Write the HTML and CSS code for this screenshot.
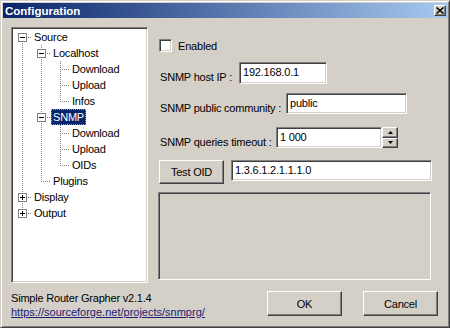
FILE: index.html
```html
<!DOCTYPE html>
<html lang="en">
<head>
  <meta charset="UTF-8">
  <meta name="viewport" content="width=device-width, initial-scale=1.0">
  <title>Configuration</title>
  <link rel="stylesheet" href="styles.css">
</head>
<body>
  <div class="window">
    <div class="titlebar">
      <span class="title">Configuration</span>
      <span class="close">
        <svg width="8" height="7" viewBox="0 0 8 7"><path d="M0.5 0.5L7.5 6.5M7.5 0.5L0.5 6.5" stroke="#000" stroke-width="1.5"/></svg>
      </span>
    </div>

    <div class="main">
      <div class="tree">
        <div class="node">
          <span class="cell first"><svg class="exp" width="9" height="9" viewBox="0 0 9 9"><rect x=".5" y=".5" width="8" height="8" fill="#fff" stroke="#808080"/><path d="M2 4.5h5" stroke="#000"/></svg></span>
          <span class="text">Source</span>
        </div>
        <div class="node">
          <span class="cell line"></span>
          <span class="cell tee"><svg class="exp" width="9" height="9" viewBox="0 0 9 9"><rect x=".5" y=".5" width="8" height="8" fill="#fff" stroke="#808080"/><path d="M2 4.5h5" stroke="#000"/></svg></span>
          <span class="text">Localhost</span>
        </div>
        <div class="node">
          <span class="cell line"></span><span class="cell line"></span><span class="cell tee"></span>
          <span class="text">Download</span>
        </div>
        <div class="node">
          <span class="cell line"></span><span class="cell line"></span><span class="cell tee"></span>
          <span class="text">Upload</span>
        </div>
        <div class="node">
          <span class="cell line"></span><span class="cell line"></span><span class="cell corner"></span>
          <span class="text">Infos</span>
        </div>
        <div class="node">
          <span class="cell line"></span>
          <span class="cell tee"><svg class="exp" width="9" height="9" viewBox="0 0 9 9"><rect x=".5" y=".5" width="8" height="8" fill="#fff" stroke="#808080"/><path d="M2 4.5h5" stroke="#000"/></svg></span>
          <span class="text selected">SNMP</span>
        </div>
        <div class="node">
          <span class="cell line"></span><span class="cell line"></span><span class="cell tee"></span>
          <span class="text">Download</span>
        </div>
        <div class="node">
          <span class="cell line"></span><span class="cell line"></span><span class="cell tee"></span>
          <span class="text">Upload</span>
        </div>
        <div class="node">
          <span class="cell line"></span><span class="cell line"></span><span class="cell corner"></span>
          <span class="text">OIDs</span>
        </div>
        <div class="node">
          <span class="cell line"></span><span class="cell corner"></span>
          <span class="text">Plugins</span>
        </div>
        <div class="node">
          <span class="cell tee"><svg class="exp" width="9" height="9" viewBox="0 0 9 9"><rect x=".5" y=".5" width="8" height="8" fill="#fff" stroke="#808080"/><path d="M2 4.5h5M4.5 2v5" stroke="#000"/></svg></span>
          <span class="text">Display</span>
        </div>
        <div class="node">
          <span class="cell corner"><svg class="exp" width="9" height="9" viewBox="0 0 9 9"><rect x=".5" y=".5" width="8" height="8" fill="#fff" stroke="#808080"/><path d="M2 4.5h5M4.5 2v5" stroke="#000"/></svg></span>
          <span class="text">Output</span>
        </div>
      </div>

      <div class="settings">
        <label class="check-row">
          <span class="checkbox"></span>
          <span>Enabled</span>
        </label>

        <div class="field-row row-host">
          <span class="label">SNMP host IP :</span>
          <span class="field">192.168.0.1</span>
        </div>

        <div class="field-row row-community">
          <span class="label">SNMP public community :</span>
          <span class="field">public</span>
        </div>

        <div class="field-row row-timeout">
          <span class="label">SNMP queries timeout :</span>
          <span class="field">1 000</span>
          <span class="spin">
            <span class="spin-btn"><svg width="5" height="3" viewBox="0 0 5 3"><path d="M2.5 0L5 3H0z" fill="#000"/></svg></span>
            <span class="spin-btn"><svg width="5" height="3" viewBox="0 0 5 3"><path d="M0 0h5L2.5 3z" fill="#000"/></svg></span>
          </span>
        </div>

        <div class="test-row">
          <button class="btn btn-test">Test OID</button>
          <span class="field">1.3.6.1.2.1.1.1.0</span>
        </div>

        <div class="output"></div>
      </div>
    </div>

    <div class="footer">
      <div class="about">
        <div>Simple Router Grapher v2.1.4</div>
        <a href="#">https://sourceforge.net/projects/snmprg/</a>
      </div>
      <div class="actions">
        <button class="btn">OK</button>
        <button class="btn">Cancel</button>
      </div>
    </div>
  </div>
</body>
</html>
```

FILE: styles.css
```css
body {
  margin: 0;
  font-family: "Liberation Sans", Arial, sans-serif;
  font-size: 11px;
  letter-spacing: -0.2px;
  color: #000;
  background-color: #d4d0c8;
}
.window {
  width: 450px;
  height: 328px;
  box-sizing: border-box;
  padding: 2px 1px 1px 2px;
  background-color: #d4d0c8;
  border: 1px solid;
  border-color: #d4d0c8 #404040 #404040 #d4d0c8;
  box-shadow: inset 1px 1px #fff, inset -1px -1px #808080;
  display: flex;
  flex-direction: column;
}
.titlebar {
  height: 15px;
  display: flex;
  align-items: center;
  justify-content: space-between;
  padding: 0 2px;
  background: linear-gradient(to right, #0a246a, #a6caf0);
  color: white;
}
.title {
  font-weight: bold;
  font-size: 11.5px;
  letter-spacing: 0;
}
.close {
  width: 12px;
  height: 11px;
  box-sizing: border-box;
  background-color: #d4d0c8;
  border: 1px solid;
  border-color: #fff #404040 #404040 #fff;
  box-shadow: inset -1px -1px #808080;
  display: flex;
  align-items: center;
  justify-content: center;
}
.main {
  display: flex;
  height: 265px;
  box-sizing: border-box;
  padding: 9px 0 0 8px;
}

/* tree */
.tree {
  width: 137px;
  height: 256px;
  box-sizing: border-box;
  padding: 1px;
  background-color: white;
  border: 1px solid;
  border-color: #808080 #fff #fff #808080;
  box-shadow: inset 1px 1px #404040, inset -1px -1px #d4d0c8;
}
.node {
  display: flex;
  height: 16px;
}
.cell {
  flex: none;
  width: 19px;
  height: 16px;
  background-repeat: no-repeat;
}
.line {
  background-image: repeating-linear-gradient(to bottom, #808080 0 1px, transparent 1px 2px);
  background-size: 1px 16px;
  background-position: 9px 0;
}
.tee {
  background-image: repeating-linear-gradient(to bottom, #808080 0 1px, transparent 1px 2px),
    repeating-linear-gradient(to right, #808080 0 1px, transparent 1px 2px);
  background-size: 1px 16px, 10px 1px;
  background-position: 9px 0, 9px 8px;
}
.corner {
  background-image: repeating-linear-gradient(to bottom, #808080 0 1px, transparent 1px 2px),
    repeating-linear-gradient(to right, #808080 0 1px, transparent 1px 2px);
  background-size: 1px 9px, 10px 1px;
  background-position: 9px 0, 9px 8px;
}
.first {
  background-image: repeating-linear-gradient(to bottom, #808080 0 1px, transparent 1px 2px),
    repeating-linear-gradient(to right, #808080 0 1px, transparent 1px 2px);
  background-size: 1px 8px, 10px 1px;
  background-position: 9px 8px, 9px 8px;
}
.exp {
  display: block;
  margin: 4px 0 0 5px;
}
.text {
  line-height: 16px;
  padding: 0 2px;
  white-space: nowrap;
}
.text.selected {
  background-color: #0a246a;
  color: white;
  outline: 1px dotted #9a9a9a;
  outline-offset: -1px;
}

/* settings */
.settings {
  width: 274px;
  margin-left: 10px;
  padding-top: 12px;
  display: flex;
  flex-direction: column;
}
.check-row {
  display: flex;
  align-items: center;
  gap: 6px;
  height: 13px;
  margin-left: 1px;
}
.checkbox {
  width: 13px;
  height: 13px;
  box-sizing: border-box;
  background-color: white;
  border: 1px solid;
  border-color: #808080 #fff #fff #808080;
  box-shadow: inset 1px 1px #404040, inset -1px -1px #d4d0c8;
}
.field-row {
  display: flex;
  align-items: flex-start;
  margin-left: 2px;
}
.label {
  flex: none;
  padding-top: 8px;
  line-height: 14px;
  white-space: nowrap;
}
.field {
  flex: none;
  box-sizing: border-box;
  height: 21px;
  padding: 0 3px;
  line-height: 19px;
  background-color: white;
  border: 1px solid;
  border-color: #808080 #fff #fff #808080;
  box-shadow: inset 1px 1px #404040, inset -1px -1px #d4d0c8;
  white-space: nowrap;
}
.row-host {
  margin-top: 10px;
}
.row-host .label {
  width: 79px;
}
.row-host .field {
  width: 88px;
  height: 22px;
}
.row-community {
  margin-top: 9px;
}
.row-community .label {
  width: 126px;
}
.row-community .field {
  width: 121px;
}
.row-timeout {
  margin-top: 12px;
}
.row-timeout .label {
  width: 116px;
}
.row-timeout .field {
  width: 106px;
}
.spin {
  display: flex;
  flex-direction: column;
  width: 16px;
  height: 21px;
}
.spin-btn {
  flex: 1;
  box-sizing: border-box;
  display: flex;
  align-items: center;
  justify-content: center;
  background-color: #d4d0c8;
  border: 1px solid;
  border-color: #fff #404040 #404040 #fff;
  box-shadow: inset -1px -1px #808080;
}
.test-row {
  display: flex;
  gap: 7px;
  margin: 11px 0 0 1px;
}
.test-row .field {
  flex: 1;
}
.btn {
  box-sizing: border-box;
  width: 75px;
  height: 25px;
  padding: 0;
  font: inherit;
  letter-spacing: inherit;
  color: #000;
  background-color: #d4d0c8;
  border: 1px solid;
  border-color: #fff #404040 #404040 #fff;
  box-shadow: inset -1px -1px #808080;
}
.btn-test {
  width: 65px;
  height: 24px;
}
.output {
  height: 88px;
  width: 273px;
  box-sizing: border-box;
  margin-top: 8px;
  border: 1px solid;
  border-color: #808080 #fff #fff #808080;
  box-shadow: inset 1px 1px #404040, inset -1px -1px #d4d0c8;
}

/* footer */
.footer {
  display: flex;
  justify-content: space-between;
  padding: 8px 10px 0 8px;
}
.about {
  line-height: 14px;
}
.about a {
  color: #202070;
  letter-spacing: 0;
}
.actions {
  display: flex;
  gap: 21px;
}
```
